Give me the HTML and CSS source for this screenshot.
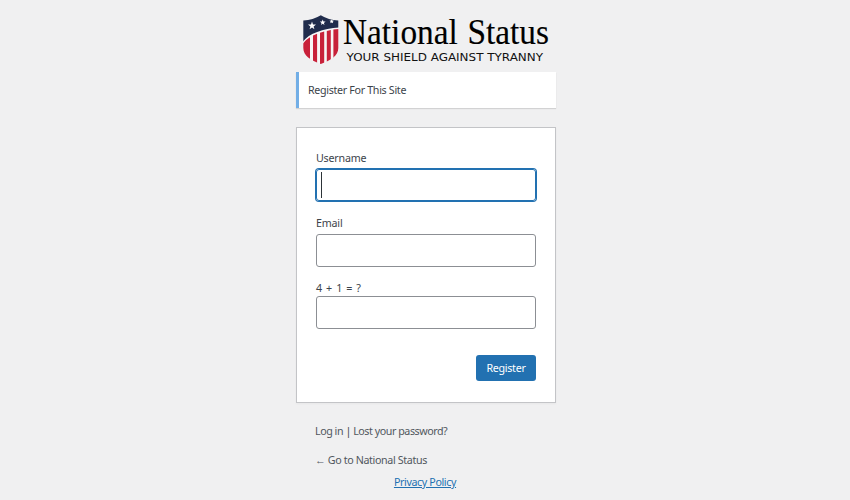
FILE: index.html
```html
<!DOCTYPE html>
<html lang="en">

<head>
      <meta charset="UTF-8">
      <meta name="viewport" content="width=device-width, initial-scale=1.0">
      <title>Register - National Status</title>
      <link rel="stylesheet" href="styles.css">
</head>

<body>
      <div class="login">
            <a class="logo" href="#">
                  <svg width="260" height="64" viewBox="296 8 260 64" role="img" aria-label="National Status">
                        <defs>
                              <clipPath id="shield">
                                    <path d="M303.300 20.600Q313 20 320.800 15.300Q328.500 20 338.300 20.600V48C338.300 56 331 60 320.800 64C310.500 60 303.300 56 303.300 48Z" />
                              </clipPath>
                        </defs>
                        <g clip-path="url(#shield)">
                              <path fill="#f7f5f6" d="M303 15h36v50h-36z" />
                              <path fill="#c8213a" d="M303 43.500Q306 39.500 310 37.300V65H303zM313 35.600L317.100 33.800V65H313zM320 32.700L324.200 31.500V65H320zM326.800 30.900L330.800 30.100V65H326.800zM333.400 29.600L339 29V65H333.400z" />
                              <path fill="#202c4c" d="M303 15h36v12.500C323 28.500 309 33.500 303 41.500z" />
                              <path fill="#fff" d="M312 21.600l1 2.800 3 .1-2.400 1.900.8 2.900-2.400-1.700-2.400 1.700.8-2.900-2.400-1.900 3-.1zM322.700 19.500l.8 2 2.100.1-1.700 1.300.6 2.100-1.800-1.200-1.800 1.200.6-2.100-1.700-1.300 2.100-.1zM331.700 19l.6 1.600 1.700.1-1.300 1 .4 1.600-1.400-.9-1.400.9.4-1.600-1.300-1 1.700-.1z" />
                        </g>
                        <text class="logo-name" x="343" y="43.500" textLength="206" lengthAdjust="spacingAndGlyphs">National Status</text>
                        <text class="logo-tagline" x="346.500" y="61" textLength="196.500" lengthAdjust="spacingAndGlyphs">YOUR SHIELD AGAINST TYRANNY</text>
                  </svg>
            </a>

            <p class="message">Register For This Site</p>

            <form class="register-form">
                  <label for="user_login">Username</label>
                  <div class="input focused"><span class="caret"></span><input type="text" id="user_login"></div>

                  <label for="user_email">Email</label>
                  <div class="input"><input type="email" id="user_email"></div>

                  <label class="sum" for="captcha">4 + 1 = ?</label>
                  <div class="input"><input type="text" id="captcha"></div>

                  <button class="btn" type="button">Register</button>
            </form>

            <p class="nav"><a href="#">Log in</a> | <a href="#">Lost your password?</a></p>
            <p class="back"><a href="#">&larr; Go to National Status</a></p>
      </div>
      <p class="privacy"><a href="#">Privacy Policy</a></p>
</body>

</html>
```
FILE: styles.css
```css
* {
      box-sizing: border-box;
}

body {
      margin: 0;
      height: 500px;
      overflow: hidden;
      background-color: #f0f0f1;
      color: #3c434a;
      font-family: "Noto Sans", "Open Sans", sans-serif;
      font-size: 10.7px;
      line-height: 16px;
}

p {
      margin: 0;
}

a {
      color: #50575e;
      text-decoration: none;
}

.login {
      width: 260px;
      margin-left: 296px;
      padding-top: 8px;
}

/* Logo */
.logo,
.logo svg {
      display: block;
      height: 64px;
      overflow: visible;
}

.logo-name {
      font-family: "Liberation Serif", serif;
      font-size: 35.5px;
      word-spacing: 1.5px;
      fill: #000;
      stroke: #000;
      stroke-width: 0.15px;
}

.logo-tagline {
      font-family: "DejaVu Sans", sans-serif;
      font-size: 11.3px;
      fill: #111;
}

/* Message above the form */
.message {
      height: 36px;
      padding: 10px 9px;
      background-color: #fff;
      border-left: 3px solid #72aee6;
      box-shadow: 0 1px 1px rgba(0, 0, 0, 0.12);
      letter-spacing: -0.32px;
}

/* Form */
.register-form {
      display: flex;
      flex-direction: column;
      height: 276px;
      margin-top: 19px;
      padding: 22px 19px 0;
      background-color: #fff;
      border: 1px solid #c3c4c7;
      box-shadow: 0 1px 2px rgba(0, 0, 0, 0.04);
}

.register-form label {
      height: 16px;
      margin-bottom: 3px;
      letter-spacing: -0.2px;
}

.register-form label.sum {
      margin-bottom: 0;
      letter-spacing: 0.6px;
}

.input {
      display: flex;
      align-items: center;
      height: 33px;
      margin-bottom: 13px;
      padding: 0 4px;
      border: 1px solid #8c8f94;
      border-radius: 3px;
}

.input.focused {
      height: 32px;
      margin-bottom: 14px;
      border-color: #2271b1;
      box-shadow: 0 0 0 1px #2271b1;
}

.input input {
      flex: 1;
      min-width: 0;
      border: 0;
      outline: 0;
      background: none;
}

.caret {
      width: 1px;
      height: 26px;
      background-color: #2c3338;
}

.btn {
      align-self: flex-end;
      width: 60px;
      height: 26px;
      margin-top: 13px;
      padding: 0;
      border: 0;
      border-radius: 3px;
      background-color: #2271b1;
      color: #fff;
      font-family: inherit;
      font-size: 10.7px;
      letter-spacing: -0.3px;
}

/* Links below the form */
.nav {
      margin-top: 20px;
      padding-left: 19px;
      letter-spacing: -0.45px;
}

.back {
      margin-top: 13px;
      padding-left: 19px;
      letter-spacing: -0.36px;
}

.privacy {
      margin-top: 6px;
      text-align: center;
      letter-spacing: -0.38px;
}

.privacy a {
      color: #2271b1;
      text-decoration: underline;
}
```
